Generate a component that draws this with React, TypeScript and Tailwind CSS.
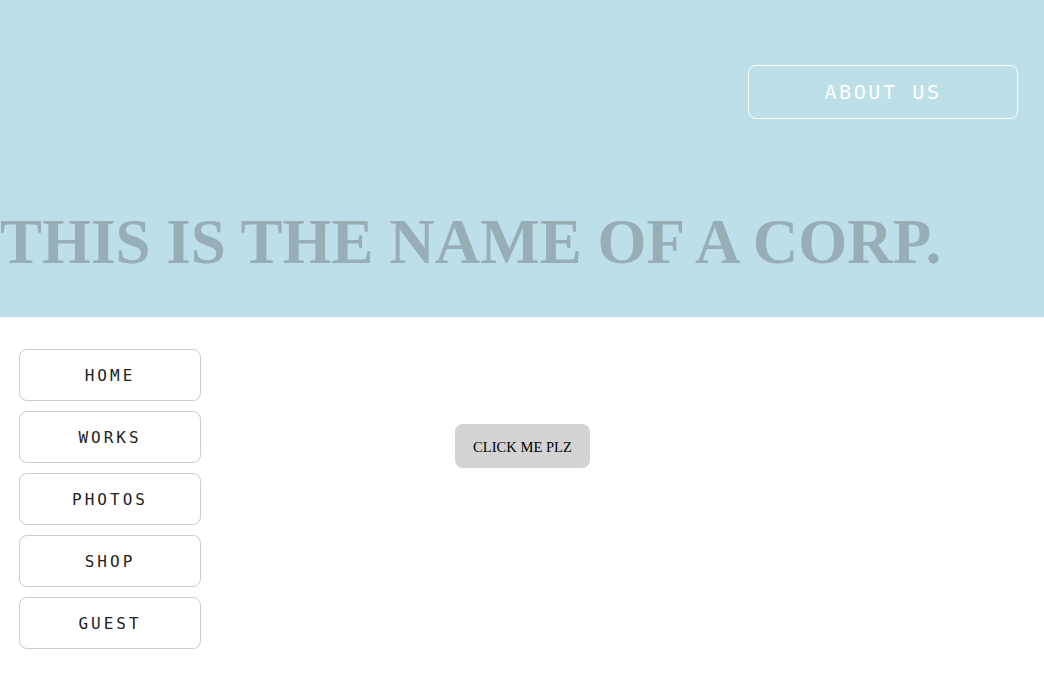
import React from 'react';

const navItems = ['HOME', 'WORKS', 'PHOTOS', 'SHOP', 'GUEST'];

const App: React.FC = () => {
  return (
    <div className="min-h-screen bg-white">
      {/* Header */}
      <header className="h-[317px] bg-[#bddfea] flex flex-col">
        <div className="flex justify-end pt-[65px] pr-[26px]">
          <button className="w-[270px] h-[54px] border border-white rounded-[8px] text-white text-[20px] tracking-[2.6px] font-['DejaVu_Sans_Mono',monospace]">
            ABOUT US
          </button>
        </div>
        <h1 className="mt-[92px] text-[63px] leading-none font-bold text-[#97aeb6] font-['Liberation_Serif',serif] whitespace-nowrap">
          THIS IS THE NAME OF A CORP.
        </h1>
      </header>

      {/* Contenido */}
      <div className="flex pt-[32px] pl-[19px]">
        <nav className="flex flex-col gap-[10px]">
          {navItems.map((item) => (
            <button
              key={item}
              className="w-[182px] h-[52px] pt-[2px] border border-[#cccccc] rounded-[8px] bg-white text-[16px] tracking-[3px] text-[#222] font-['DejaVu_Sans_Mono',monospace]"
            >
              {item}
            </button>
          ))}
        </nav>
        <div className="pl-[254px] pt-[75px]">
          <button className="w-[135px] h-[44px] pt-[3px] bg-[#d3d3d3] rounded-[8px] text-[14.6px] text-black font-['Liberation_Serif',serif]">
            CLICK ME PLZ
          </button>
        </div>
      </div>
    </div>
  );
};

export default App;
